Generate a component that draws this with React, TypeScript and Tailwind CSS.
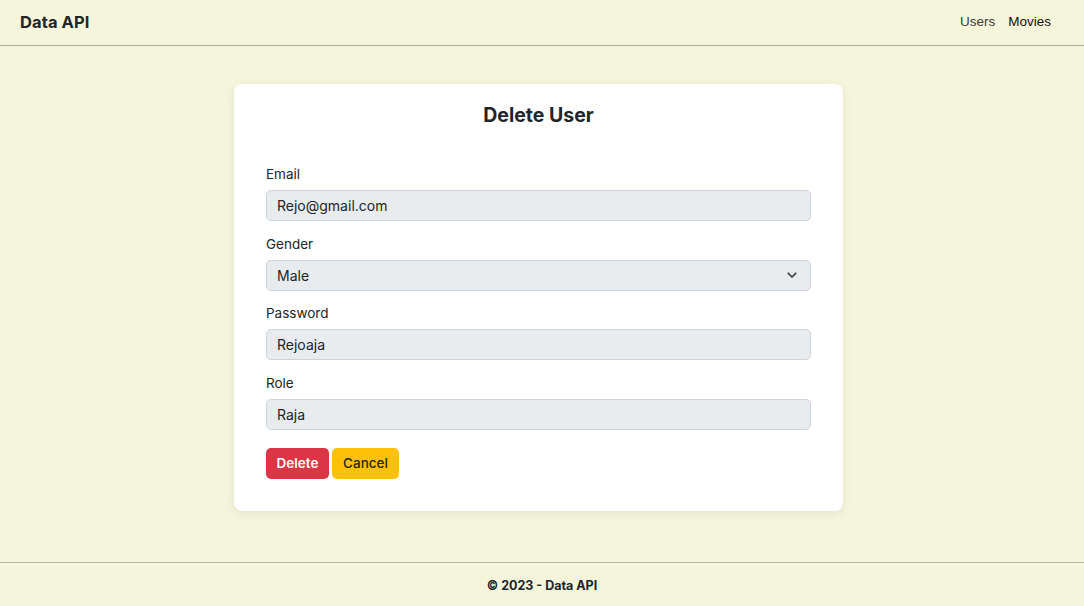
import React from "react";

function Field({ label, value }: { label: string; value: string }) {
  return (
    <div className="flex flex-col">
      <label className="text-[13.5px] text-[#212529] leading-[20px] mb-[6px]">{label}</label>
      <div className="h-[31px] rounded-[5px] border border-[#ced4da] bg-[#e9ecef] px-[10px] flex items-center text-[14px] text-[#212529]">
        {value}
      </div>
    </div>
  );
}

export default function App() {
  return (
    <div className="min-h-[606px] bg-[#f5f5dc] flex flex-col font-['Inter',sans-serif]">
      <header className="h-[46px] border-b border-[#a9a9a0] flex items-center justify-between pl-[20px] pr-[33px]">
        <span className="text-[16.5px] font-bold text-[#212529] tracking-[0.1px]">Data API</span>
        <nav className="flex gap-[13px] text-[13.5px] font-['Liberation_Sans',sans-serif]">
          <span className="text-[#3a3a3a]">Users</span>
          <span className="text-[#111]">Movies</span>
        </nav>
      </header>
      <main className="flex-1 flex justify-center pt-[38px] pr-[7px]">
        <div className="w-[609px] h-[427px] bg-white rounded-[8px] shadow-[0_2px_10px_rgba(0,0,0,0.08)] px-[32px] pt-[17px]">
          <h1 className="text-center text-[19.5px] font-bold text-[#212529] leading-[28px]">Delete User</h1>
          <div className="mt-[35px] flex flex-col gap-[12.5px]">
            <Field label="Email" value="Rejo@gmail.com" />
            <div className="flex flex-col">
              <label className="text-[13.5px] text-[#212529] leading-[20px] mb-[6px]">Gender</label>
              <div className="h-[31px] rounded-[5px] border border-[#ced4da] bg-[#e9ecef] pl-[10px] pr-[12px] flex items-center justify-between text-[14px] text-[#212529]">
                <span>Male</span>
                <svg width="12" height="9" viewBox="0 0 16 12" fill="none" stroke="#343a40" strokeWidth="2.2" strokeLinecap="round" strokeLinejoin="round">
                  <path d="M3 3l5 5 5-5" />
                </svg>
              </div>
            </div>
            <Field label="Password" value="Rejoaja" />
            <Field label="Role" value="Raja" />
          </div>
          <div className="mt-[18px] flex gap-[3px]">
            <button className="h-[31px] w-[63px] rounded-[5px] bg-[#dc3545] text-white text-[13.5px] font-semibold">Delete</button>
            <button className="h-[31px] w-[67px] rounded-[5px] bg-[#ffc107] text-[#212529] text-[13.5px] font-medium">Cancel</button>
          </div>
        </div>
      </main>
      <footer className="h-[44px] border-t border-[#b8b8a8] flex items-center justify-center pt-[4px]">
        <span className="text-[12.5px] font-bold text-[#212529]">© 2023 - Data API</span>
      </footer>
    </div>
  );
}
